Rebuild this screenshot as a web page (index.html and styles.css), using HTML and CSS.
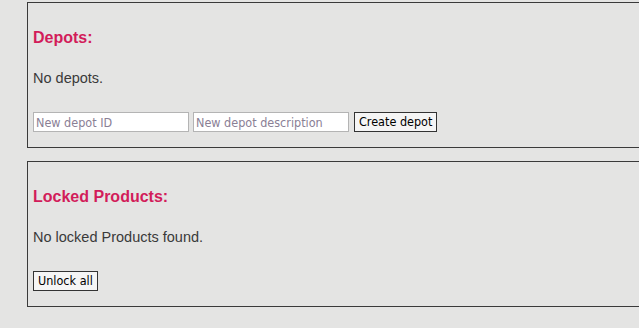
FILE: index.html
```html
<!DOCTYPE html>
<html lang="en">
<head>
<meta charset="utf-8">
<title>Depots</title>
<link rel="stylesheet" href="styles.css">
</head>
<body>
  <div class="page">
    <section class="panel panel-depots">
      <h3 class="panel-title">Depots:</h3>
      <p class="panel-text">No depots.</p>
      <form class="depot-form" onsubmit="return false">
        <input class="field" type="text" placeholder="New depot ID">
        <input class="field" type="text" placeholder="New depot description">
        <button class="btn btn-create" type="button">Create depot</button>
      </form>
    </section>
    <section class="panel panel-locked">
      <h3 class="panel-title">Locked Products:</h3>
      <p class="panel-text">No locked Products found.</p>
      <div class="actions">
        <button class="btn" type="button">Unlock all</button>
      </div>
    </section>
  </div>
</body>
</html>
```

FILE: styles.css
```css
html, body {
  margin: 0;
  padding: 0;
  overflow: hidden;
  background: #e4e4e3;
}

body {
  font-family: "Liberation Sans", Arial, sans-serif;
  color: #3a3a3a;
}

.page {
  padding: 2px 0 0 27px;
}

.panel {
  border: 1px solid #3a3a3a;
  margin-right: -40px;
  padding: 26px 5px 15px 5px;
}

.panel + .panel {
  margin-top: 13px;
}

.panel-title {
  margin: 0;
  font-size: 16px;
  line-height: 18px;
  font-weight: bold;
  color: #d21c5a;
}

.panel-text {
  margin: 23px 0 0 0;
  font-size: 14.5px;
  line-height: 16px;
}

.depot-form,
.actions {
  margin-top: 26px;
  display: flex;
  align-items: flex-start;
  gap: 4px;
}

.field {
  box-sizing: border-box;
  width: 156px;
  height: 20px;
  margin: 0;
  padding: 0 2px;
  border: 1px solid #b4b4b4;
  background: #ffffff;
  font-family: "DejaVu Sans Condensed", "DejaVu Sans", sans-serif;
  font-stretch: condensed;
  font-size: 12.5px;
  color: #222;
}

.field::placeholder {
  color: #8a8095;
}

.btn {
  box-sizing: border-box;
  height: 20px;
  margin: 0;
  padding: 0 4px;
  border: 1px solid #333;
  border-radius: 0;
  background: #f5f5f5;
  font-family: "DejaVu Sans Condensed", "DejaVu Sans", sans-serif;
  font-stretch: condensed;
  font-size: 12.5px;
  line-height: 16px;
  color: #000;
}

.btn-create {
  margin-left: 1px;
}
```
